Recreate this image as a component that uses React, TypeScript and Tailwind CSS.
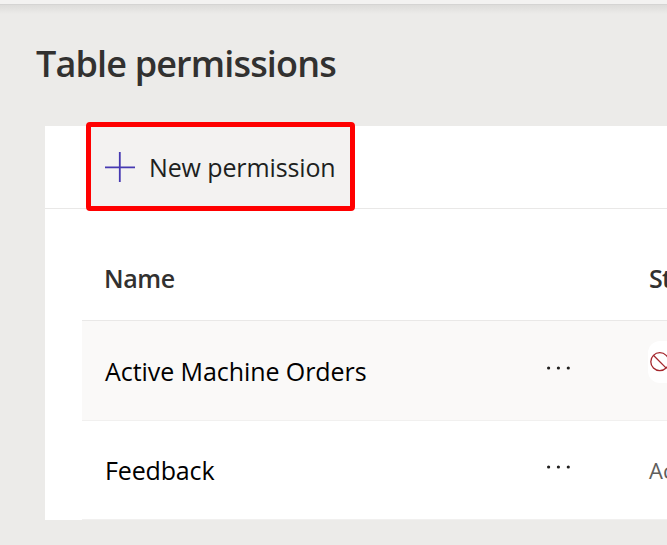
import React from "react";

function MoreDots() {
  return (
    <svg width="26" height="4" viewBox="0 0 26 4" fill="#201f1e" aria-label="More">
      <circle cx="2.6" cy="2" r="1.6" />
      <circle cx="12.4" cy="2" r="1.6" />
      <circle cx="22.3" cy="2" r="1.6" />
    </svg>
  );
}

function Row({ name, className, children }: { name: React.ReactNode; className: string; children: React.ReactNode }) {
  return (
    <div className={`flex shrink-0 border-b pl-[23px] ${className}`}>
      <div className="w-[441px] shrink-0 whitespace-nowrap leading-8 text-black">{name}</div>
      <div className="w-[102px] shrink-0 pt-[11px]">
        <MoreDots />
      </div>
      {children}
    </div>
  );
}

export default function App() {
  return (
    <div className="flex h-[545px] w-[667px] flex-col overflow-hidden bg-[#ecebe9] font-['Open_Sans','Noto_Sans',sans-serif] text-[25px]">
      <div className="h-1 shrink-0 bg-[#f3f2f1]" />
      <div className="h-px shrink-0 bg-[#d5d4d3]" />
      <div className="h-[9px] shrink-0 bg-linear-to-b from-[#dddcda] to-[#ecebe9]" />
      <h1 className="h-[112px] shrink-0 whitespace-nowrap pl-[36px] pt-[26px] text-[36px] font-semibold leading-[48px] tracking-[-0.85px] text-[#323130]">
        Table permissions
      </h1>

      <main className="ml-[45px] flex h-[394px] shrink-0 flex-col bg-white">
        <div className="flex h-[83px] shrink-0 border-b border-[#e9e8e7]">
          <button className="-mt-1 ml-[41px] flex h-[89px] w-[269px] shrink-0 items-center whitespace-nowrap rounded-[4px] border-5 border-[#ff0000] bg-[#f3f2f1] pl-[14px] text-[#201f1e]">
            <svg width="30" height="30" viewBox="0 0 30 30" fill="none" stroke="#4639b2" strokeWidth="1.8">
              <path d="M0 15.4H30M14.8 0V30" />
            </svg>
            <span className="ml-[14px] pt-[2px] tracking-[-0.12px]">New permission</span>
          </button>
        </div>

        <section className="ml-[37px] flex flex-col">
          <div className="flex h-[112px] shrink-0 border-b border-[#e9e8e7] pl-[22px] pt-[53px] font-semibold leading-8 text-[#323130]">
            <div className="w-[545px] shrink-0">
              <span className="tracking-[-0.4px]">Name</span>
            </div>
            <div className="whitespace-nowrap tracking-[-0.7px]">State</div>
          </div>

          <Row
            name={<span className="tracking-[-0.07px]">Active Machine Orders</span>}
            className="h-[100px] border-[#f1f0ef] bg-[#faf9f8] pt-[34px]"
          >
            <div className="-mt-[14px] flex h-[42px] w-[60px] shrink-0 items-center rounded-[12px] bg-white pl-[2px]">
              <svg width="20" height="20" viewBox="0 0 20 20" fill="none" stroke="#a4262c" strokeWidth="1.3">
                <circle cx="9.8" cy="9.7" r="9" />
                <path d="M3.4 3.3L16.2 16.1" />
              </svg>
            </div>
          </Row>

          <Row
            name={<span className="tracking-[-0.15px]">Feedback</span>}
            className="h-[99px] border-[#f1f0ef] pt-[33px]"
          >
            <div className="ml-px whitespace-nowrap text-[22px] leading-8 text-[#605e5c]">Active</div>
          </Row>
        </section>
      </main>
    </div>
  );
}
